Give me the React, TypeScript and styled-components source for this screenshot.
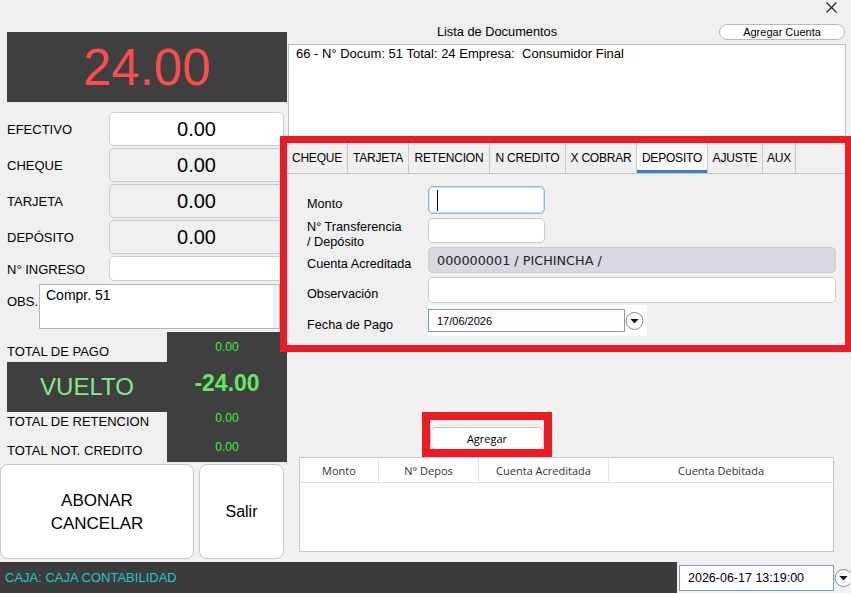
import styled, { createGlobalStyle } from "styled-components";

const GlobalStyle = createGlobalStyle`
  html, body {
    margin: 0;
    padding: 0;
    background: #f0f0f0;
  }
  body {
    font-family: "Liberation Sans", Arial, sans-serif;
    color: #000;
  }
  * {
    box-sizing: border-box;
  }
`;

const Window = styled.div`
  width: 851px;
  height: 593px;
  display: flex;
  flex-direction: column;
  background: #f0f0f0;
  overflow: hidden;
`;

const Main = styled.div`
  display: flex;
  height: 562px;
`;

/* ---------- left column ---------- */

const LeftPanel = styled.div`
  width: 287px;
  display: flex;
  flex-direction: column;
  padding-top: 32px;
`;

const AmountBox = styled.div`
  margin-left: 7px;
  width: 280px;
  height: 70px;
  background: #3f3f3f;
  color: #fc4c4c;
  font-size: 51px;
  display: flex;
  align-items: center;
  justify-content: center;
`;

const FieldGrid = styled.div`
  margin-top: 10px;
  margin-left: 7px;
  display: grid;
  grid-template-columns: 102px 175px;
  grid-template-rows: 34px 34px 34px 34px 25px;
  row-gap: 2px;
`;

const FieldLabel = styled.div`
  font-size: 13px;
  line-height: 15px;
  align-self: center;
  padding-top: 1px;
`;

const ValueField = styled.div<{ $white?: boolean }>`
  border: 1px solid #cacaca;
  border-radius: 5px;
  background: ${(p) => (p.$white ? "#ffffff" : "#f0f0f0")};
  font-size: 20px;
  display: flex;
  align-items: center;
  justify-content: center;
`;

const ObsRow = styled.div`
  margin-top: 3px;
  margin-left: 7px;
  display: flex;
  height: 45px;
`;

const ObsLabel = styled.div`
  width: 32px;
  font-size: 13px;
  line-height: 15px;
  padding-top: 10px;
`;

const ObsArea = styled.div`
  width: 241px;
  height: 45px;
  background: #fff;
  border: 1px solid #b4b4b4;
  box-shadow: inset -6px 0 0 #f0f0f0;
  font-size: 14px;
  line-height: 16px;
  padding: 2px 6px;
`;

const Totals = styled.div`
  margin-top: 3px;
  margin-left: 7px;
  width: 280px;
  display: flex;
  flex-direction: column;
`;

const TotalRow = styled.div<{ $h: number }>`
  display: flex;
  height: ${(p) => p.$h}px;
`;

const TotalLabel = styled.div<{ $top: number }>`
  width: 160px;
  font-size: 13px;
  line-height: 15px;
  padding-top: ${(p) => p.$top}px;
`;

const TotalValue = styled.div<{ $top: number }>`
  width: 120px;
  background: #3f3f3f;
  color: #3ef03e;
  font-size: 12px;
  line-height: 12px;
  text-align: center;
  padding-top: ${(p) => p.$top}px;
`;

const VueltoBand = styled.div`
  height: 50px;
  display: flex;
  background: #3f3f3f;
`;

const VueltoText = styled.div`
  width: 160px;
  display: flex;
  align-items: center;
  justify-content: center;
  color: #86e886;
  font-size: 24px;
`;

const VueltoAmount = styled.div`
  width: 120px;
  display: flex;
  align-items: center;
  justify-content: center;
  padding-bottom: 8px;
  color: #62e862;
  font-size: 23px;
  font-weight: bold;
`;

const ButtonRow = styled.div`
  margin-top: 2px;
  display: flex;
  gap: 5px;
`;

const BigButton = styled.div<{ $w: number; $size: number }>`
  width: ${(p) => p.$w}px;
  height: 95px;
  background: #fff;
  border: 1px solid #c8c8c8;
  border-radius: 8px;
  font-size: ${(p) => p.$size}px;
  line-height: 23px;
  display: flex;
  align-items: center;
  justify-content: center;
  text-align: center;
`;

/* ---------- right column ---------- */

const RightPanel = styled.div`
  flex: 1;
  display: flex;
  flex-direction: column;
`;

const TopBar = styled.div`
  height: 24px;
  display: flex;
  justify-content: flex-end;
  padding: 2px 14px 0 0;
`;

const HeaderRow = styled.div`
  height: 20px;
  display: flex;
  align-items: flex-start;
`;

const ListTitle = styled.div`
  width: 420px;
  text-align: center;
  font-size: 12.8px;
  line-height: 16px;
`;

const SmallButton = styled.div`
  margin-left: auto;
  margin-right: 6px;
  width: 126px;
  height: 16px;
  background: #fff;
  border: 1px solid #b9b9b9;
  border-radius: 8px;
  font-size: 11px;
  display: flex;
  align-items: center;
  justify-content: center;
`;

const DocList = styled.div`
  margin-left: 1px;
  width: 558px;
  height: 99px;
  background: #fff;
  border: 1px solid #bdbdbd;
  font-size: 13px;
  line-height: 16px;
  padding: 1px 7px;
`;

const TabPanel = styled.div`
  position: relative;
  z-index: 1;
  width: 558px;
  height: 202px;
  background: #f0f0f0;
  outline: 7px solid #ed1c24;
  display: flex;
  flex-direction: column;
`;

const TabBar = styled.div`
  height: 31px;
  display: flex;
  border-bottom: 1px solid #c4c4c4;
`;

const Tab = styled.div<{ $w: number; $active?: boolean }>`
  width: ${(p) => p.$w}px;
  display: flex;
  align-items: center;
  justify-content: center;
  font-size: 12px;
  letter-spacing: -0.2px;
  white-space: nowrap;
  border-right: 1px solid #c8c8c8;
  background: ${(p) => (p.$active ? "#f9f9f9" : "transparent")};
  box-shadow: ${(p) => (p.$active ? "inset 0 -3px 0 #3b7dc8" : "none")};
`;

const FormGrid = styled.div`
  padding: 12px 0 0 20px;
  display: grid;
  grid-template-columns: 121px auto;
  grid-template-rows: 28px 25px 26px 26px 29px;
  row-gap: 4px;
`;

const FormLabel = styled.div`
  align-self: center;
  font-size: 12.7px;
  line-height: 15px;
  padding-top: 8px;
  white-space: nowrap;
`;

const Input = styled.div<{ $w: number; $bg?: string; $focus?: boolean }>`
  width: ${(p) => p.$w}px;
  background: ${(p) => p.$bg ?? "#fff"};
  border: 1px solid ${(p) => (p.$focus ? "#8ab7e6" : p.$bg ? "#c9ccd2" : "#c8c8c8")};
  box-shadow: ${(p) => (p.$focus ? "inset 0 0 0 1px #c9def5" : "none")};
  border-radius: 5px;
  display: flex;
  align-items: center;
  padding-left: 8px;
`;

const Caret = styled.span`
  width: 1px;
  height: 21px;
  background: #000;
`;

const AccountText = styled.span`
  font-family: "DejaVu Sans", Verdana, sans-serif;
  font-size: 12.8px;
  color: #222;
`;

const DateWrap = styled.div`
  margin-top: -2px;
  width: 219px;
  background: #fff;
  display: flex;
  align-items: center;
`;

const DateInput = styled.div<{ $w: number; $h: number; $size: number }>`
  width: ${(p) => p.$w}px;
  height: ${(p) => p.$h}px;
  background: #fff;
  border: 1px solid #7b9dc4;
  font-size: ${(p) => p.$size}px;
  display: flex;
  align-items: center;
  padding-left: 8px;
`;

const AddArea = styled.div`
  margin-top: 82px;
  margin-left: 143px;
`;

const AddButton = styled.div`
  position: relative;
  width: 114px;
  height: 23px;
  background: #fff;
  border: 1px solid #c6c6c6;
  border-radius: 6px;
  font-family: "Open Sans", sans-serif;
  font-size: 11px;
  display: flex;
  align-items: center;
  justify-content: center;

  &::after {
    content: "";
    position: absolute;
    top: -16px;
    left: -9px;
    right: -9px;
    bottom: -8px;
    border: 8px solid #ed1c24;
  }
`;

const Table = styled.div`
  margin-top: 7px;
  margin-left: 12px;
  width: 535px;
  height: 95px;
  background: #fff;
  border: 1px solid #c6c6c6;
`;

const TableHead = styled.div`
  display: grid;
  grid-template-columns: 79px 100px 130px 1fr;
  height: 25px;
  border-bottom: 1px solid #e2e2e2;
`;

const HeadCell = styled.div<{ $last?: boolean }>`
  display: flex;
  align-items: center;
  justify-content: center;
  font-family: "Open Sans", sans-serif;
  font-size: 11px;
  color: #333;
  border-right: ${(p) => (p.$last ? "none" : "1px solid #e2e2e2")};
`;

/* ---------- status bar ---------- */

const StatusBar = styled.div`
  height: 31px;
  display: flex;
`;

const StatusText = styled.div`
  width: 677px;
  background: #3c3c3c;
  color: #1ec6d0;
  font-size: 13px;
  display: flex;
  align-items: center;
  padding-left: 5px;
`;

const StatusRight = styled.div`
  flex: 1;
  display: flex;
  align-items: center;
  padding-left: 2px;
  overflow: hidden;
`;

function DropIcon({ width = 19 }: { width?: number }) {
  return (
    <svg width={width} height="20" viewBox={`0 0 ${width} 20`}>
      <circle cx="9.5" cy="10" r="8.5" fill="#fafafa" stroke="#8a8a8a" />
      <path d="M5.5 8 L13.5 8 L9.5 12.5 Z" fill="#111" />
    </svg>
  );
}

function CloseIcon() {
  return (
    <svg width="11" height="11" viewBox="0 0 11 11">
      <path d="M0.5 0.5 L10.5 10.5 M10.5 0.5 L0.5 10.5" stroke="#222" strokeWidth="1.1" />
    </svg>
  );
}

const tabs = [
  { label: "CHEQUE", w: 61 },
  { label: "TARJETA", w: 61 },
  { label: "RETENCION", w: 81 },
  { label: "N CREDITO", w: 76 },
  { label: "X COBRAR", w: 71 },
  { label: "DEPOSITO", w: 71 },
  { label: "AJUSTE", w: 55 },
  { label: "AUX", w: 33 },
];

export default function App() {
  return (
    <Window>
      <GlobalStyle />
      <Main>
        <LeftPanel>
          <AmountBox>24.00</AmountBox>
          <FieldGrid>
            <FieldLabel>EFECTIVO</FieldLabel>
            <ValueField $white>0.00</ValueField>
            <FieldLabel>CHEQUE</FieldLabel>
            <ValueField>0.00</ValueField>
            <FieldLabel>TARJETA</FieldLabel>
            <ValueField>0.00</ValueField>
            <FieldLabel>DEPÓSITO</FieldLabel>
            <ValueField>0.00</ValueField>
            <FieldLabel>N° INGRESO</FieldLabel>
            <ValueField $white />
          </FieldGrid>
          <ObsRow>
            <ObsLabel>OBS.</ObsLabel>
            <ObsArea>Compr. 51</ObsArea>
          </ObsRow>
          <Totals>
            <TotalRow $h={30}>
              <TotalLabel $top={12}>TOTAL DE PAGO</TotalLabel>
              <TotalValue $top={9}>0.00</TotalValue>
            </TotalRow>
            <VueltoBand>
              <VueltoText>VUELTO</VueltoText>
              <VueltoAmount>-24.00</VueltoAmount>
            </VueltoBand>
            <TotalRow $h={25}>
              <TotalLabel $top={2}>TOTAL DE RETENCION</TotalLabel>
              <TotalValue $top={0}>0.00</TotalValue>
            </TotalRow>
            <TotalRow $h={25}>
              <TotalLabel $top={6}>TOTAL NOT. CREDITO</TotalLabel>
              <TotalValue $top={4}>0.00</TotalValue>
            </TotalRow>
          </Totals>
          <ButtonRow>
            <BigButton $w={194} $size={17}>
              ABONAR
              <br />
              CANCELAR
            </BigButton>
            <BigButton $w={85} $size={16}>
              Salir
            </BigButton>
          </ButtonRow>
        </LeftPanel>

        <RightPanel>
          <TopBar>
            <CloseIcon />
          </TopBar>
          <HeaderRow>
            <ListTitle>Lista de Documentos</ListTitle>
            <SmallButton>Agregar Cuenta</SmallButton>
          </HeaderRow>
          <DocList>66 - N° Docum: 51 Total: 24 Empresa:&nbsp; Consumidor Final</DocList>
          <TabPanel>
            <TabBar>
              {tabs.map((t) => (
                <Tab key={t.label} $w={t.w} $active={t.label === "DEPOSITO"}>
                  {t.label}
                </Tab>
              ))}
            </TabBar>
            <FormGrid>
              <FormLabel>Monto</FormLabel>
              <Input $w={117} $focus>
                <Caret />
              </Input>
              <FormLabel>
                N° Transferencia
                <br />/ Depósito
              </FormLabel>
              <Input $w={117} />
              <FormLabel>Cuenta Acreditada</FormLabel>
              <Input $w={408} $bg="#d6d9df">
                <AccountText>000000001 / PICHINCHA /</AccountText>
              </Input>
              <FormLabel>Observación</FormLabel>
              <Input $w={408} />
              <FormLabel>Fecha de Pago</FormLabel>
              <DateWrap>
                <DateInput $w={197} $h={23} $size={11}>
                  17/06/2026
                </DateInput>
                <DropIcon />
              </DateWrap>
            </FormGrid>
          </TabPanel>
          <AddArea>
            <AddButton>Agregar</AddButton>
          </AddArea>
          <Table>
            <TableHead>
              <HeadCell>Monto</HeadCell>
              <HeadCell>N° Depos</HeadCell>
              <HeadCell>Cuenta Acreditada</HeadCell>
              <HeadCell $last>Cuenta Debitada</HeadCell>
            </TableHead>
          </Table>
        </RightPanel>
      </Main>
      <StatusBar>
        <StatusText>CAJA: CAJA CONTABILIDAD</StatusText>
        <StatusRight>
          <DateInput $w={155} $h={26} $size={12.5}>
            2026-06-17 13:19:00
          </DateInput>
          <DropIcon width={16} />
        </StatusRight>
      </StatusBar>
    </Window>
  );
}
